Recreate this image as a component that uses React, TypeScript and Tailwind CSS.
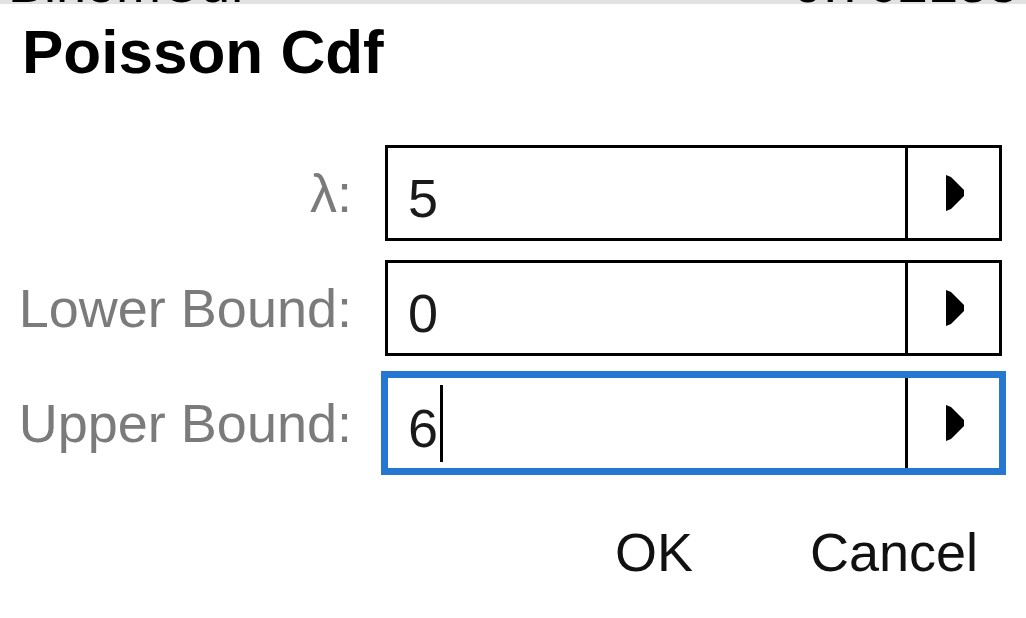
import React from 'react';

// Poisson Cdf wizard dialog (calculator-style, scaled up)

type Field = { label: string; value: string; focused?: boolean };

const FIELDS: Field[] = [
  { label: 'λ:', value: '5' },
  { label: 'Lower Bound:', value: '0' },
  { label: 'Upper Bound:', value: '6', focused: true },
];

function ArrowRight() {
  return (
    <svg width="18" height="36" viewBox="0 0 18 36" aria-hidden>
      <polygon points="0,0 5,2 18,15 18,21 5,34 0,36" fill="#000" />
    </svg>
  );
}

function FieldRow({ field }: { field: Field }) {
  return (
    <div className="flex items-center">
      <div className="w-[352px] text-right text-[54px] leading-none text-[#7b7b7b] whitespace-nowrap">
        {field.label}
      </div>
      <div
        className={
          field.focused
            ? 'ml-[33px] flex h-[96px] w-[617px] border-[3px] border-[#2577d2] ring-[4px] ring-[#2577d2]'
            : 'ml-[33px] flex h-[96px] w-[617px] border-[3px] border-black'
        }
      >
        <div className="flex flex-1 items-center pl-[20px]">
          <span className="pt-[9px] text-[54px] leading-none text-[#1a1a1a]">{field.value}</span>
          {field.focused && <span className="ml-[2px] h-[77px] w-[3px] bg-black" />}
        </div>
        <div className="flex w-[94px] items-center justify-center border-l-[3px] border-black pl-[3px]">
          <ArrowRight />
        </div>
      </div>
    </div>
  );
}

export default function App() {
  return (
    <div
      className="relative h-[618px] w-[1026px] overflow-hidden bg-white"
      style={{ fontFamily: '"Liberation Sans", Arial, sans-serif' }}
    >
      {/* clipped history line from the screen behind */}
      <div className="h-[4px] overflow-hidden bg-[#e2e2e2]">
        <div className="mt-[-44px] flex justify-between px-[8px] text-[54px] leading-none text-black whitespace-nowrap">
          <span>BinomCdf</span>
          <span>0.762183</span>
        </div>
      </div>

      <h1 className="mt-[17px] pl-[22px] text-[62px] font-bold leading-none text-black">Poisson Cdf</h1>

      <div className="mt-[62px] flex flex-col gap-[19px]">
        {FIELDS.map((f) => (
          <FieldRow key={f.label} field={f} />
        ))}
      </div>

      <div className="mt-[54px] flex justify-end gap-[117px] pr-[48px] text-[54px] leading-none text-[#111]">
        <span>OK</span>
        <span>Cancel</span>
      </div>
    </div>
  );
}
